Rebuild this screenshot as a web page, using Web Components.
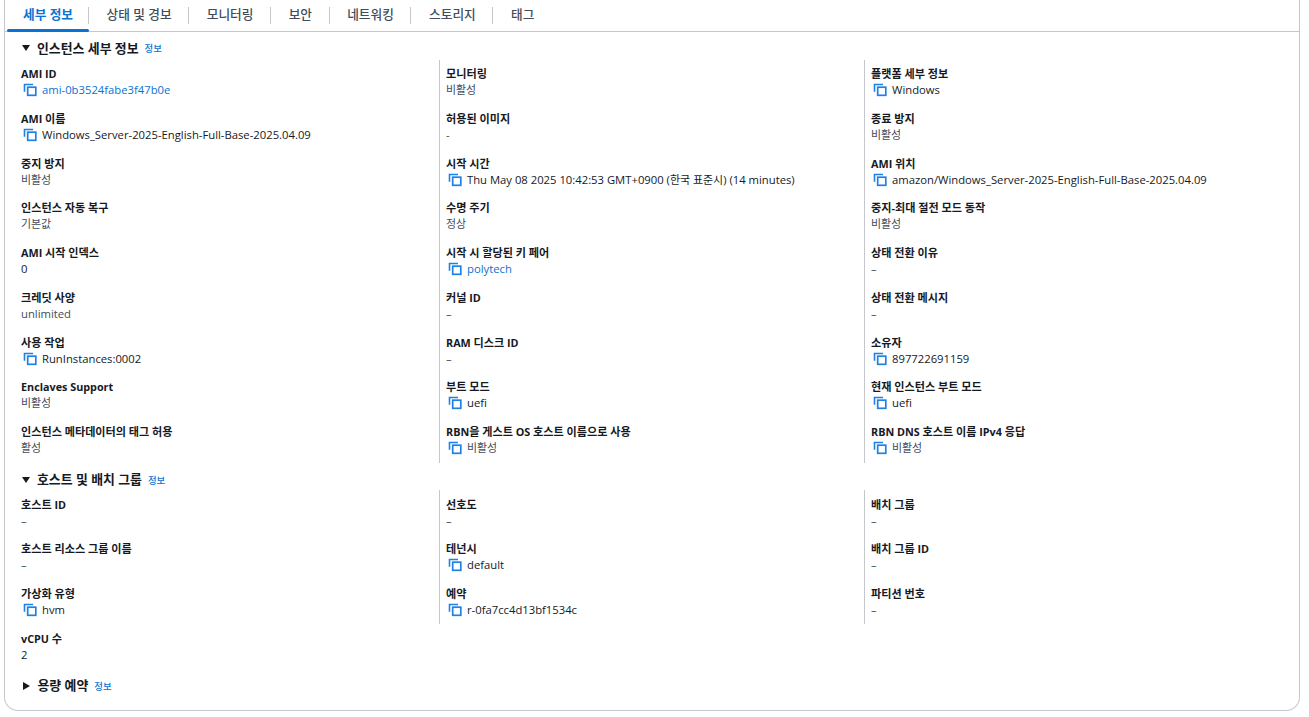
<!DOCTYPE html>
<html lang="ko">
<head>
<meta charset="utf-8">
<title>인스턴스 세부 정보</title>
<style>
	html, body { margin: 0; background: #fff; }
	body {
		padding: 0 9px 6px 4px;
		height: 717px;
		box-sizing: border-box;
		overflow: hidden;
		font-family: "Open Sans", "Noto Sans CJK KR", sans-serif;
		color: #16191f;
	}
	.k { font-size: 0.97em; }
</style>
</head>
<body>
<ec2-panel>
	<ec2-tabs></ec2-tabs>
	<ec2-section title="인스턴스 세부 정보" open id="details" style="--top: 6px; --cols-gap: 2px; --pad: 6px"></ec2-section>
	<ec2-section title="호스트 및 배치 그룹" open id="host" style="--top: 7px; --pad: 6.8px"></ec2-section>
	<ec2-section title="용량 예약" id="capacity" style="--top: 7px"></ec2-section>
</ec2-panel>

<script>
const COPY_ICON = `<svg width="14" height="14" viewBox="0 0 14 14" fill="none" stroke="#1f80e6" aria-hidden="true"><path d="M1.5 8.8V1.5H10" stroke-width="1.6"/><rect x="4.7" y="4.2" width="8.1" height="8.1" stroke-width="1.7"/></svg>`;
const hangul = (s) => s.replace(/[가-힣]+/g, (m) => `<span class="k">${m}</span>`);

customElements.define('ec2-panel', class extends HTMLElement {
	constructor() {
		super();
		this.attachShadow({ mode: "open" }).innerHTML = `
			<style>
				:host {
					display: block;
					height: 711px;
					box-sizing: border-box;
					border: 1px solid #c6c6cd;
					border-top: 0;
					border-radius: 0 0 14px 14px;
				}
			</style>
			<slot></slot>
		`;
	}
});

customElements.define('ec2-tabs', class extends HTMLElement {
	constructor() {
		super();
		const tabs = ["세부 정보", "상태 및 경보", "모니터링", "보안", "네트워킹", "스토리지", "태그"];
		this.attachShadow({ mode: "open" }).innerHTML = `
			<style>
				:host {
					display: flex;
					height: 32px;
					padding-left: 2px;
					box-sizing: border-box;
					border-bottom: 1px solid #c6c6cd;
					font-size: 12.7px;
					font-weight: 500;
					color: #414d5c;
				}
				a {
					position: relative;
					display: flex;
					align-items: center;
					height: 31px;
					padding: 0 17.6px 4px;
					box-sizing: border-box;
				}
				a:first-of-type { padding: 0 16px 4px; color: #0972d3; font-weight: 700; }
				a:not(:last-of-type)::after {
					content: "";
					position: absolute;
					right: 0;
					top: 7px;
					height: 17px;
					border-right: 1px solid #c6c6cd;
				}
				a:first-of-type::before {
					content: "";
					position: absolute;
					left: 0;
					right: 0;
					bottom: -1px;
					height: 3px;
					border-radius: 2px;
					background: #0972d3;
				}
			</style>
			${tabs.map((t) => `<a>${t}</a>`).join("")}
		`;
	}
});

customElements.define('ec2-section', class extends HTMLElement {
	constructor() {
		super();
		const open = this.hasAttribute("open");
		this.attachShadow({ mode: "open" }).innerHTML = `
			<style>
				:host { display: block; padding: var(--top, 0) 0 0 16px; }
				header {
					display: flex;
					align-items: center;
					height: 20px;
					font-size: 12.9px;
					font-weight: 700;
				}
				span { position: relative; top: -1px; }
				i {
					width: 0;
					height: 0;
					margin-right: 7.5px;
					${open
						? "border: 4.5px solid transparent; border-top: 6px solid #16191f; border-bottom: 0; margin-left: 0.5px;"
						: "border: 4px solid transparent; border-left: 7px solid #16191f; border-right: 0; margin: 0 7.5px 0 2px;"}
				}
				a { margin-left: 6px; font-size: 9.4px; color: #0972d3; font-weight: 500; }
				.cols {
					display: grid;
					grid-template-columns: 421px 425px 1fr;
					margin: var(--cols-gap, 0) 0 0 -3px;
				}
			</style>
			<header><i></i><span>${this.getAttribute("title")}</span><a>정보</a></header>
			<div class="cols"><slot></slot></div>
		`;
	}
});

customElements.define('ec2-column', class extends HTMLElement {
	constructor() {
		super();
		this.attachShadow({ mode: "open" }).innerHTML = `
			<style>
				:host {
					display: block;
					align-self: start;
					padding: var(--pad, 6px) 0 0 3px;
					height: var(--h);
					box-sizing: border-box;
				}
				:host(:not(:first-child)) { border-left: 1px solid #c6c6cd; padding-left: 6px; }
			</style>
			<slot></slot>
		`;
	}
});

customElements.define('ec2-field', class extends HTMLElement {
	constructor() {
		super();
		this.attachShadow({ mode: "open" });
	}

	connectedCallback() {
		const copy = this.hasAttribute("copy");
		const colour = this.hasAttribute("link") ? "#0972d3" : this.hasAttribute("muted") ? "#414d5c" : "#16191f";
		this.shadowRoot.innerHTML = `
			<style>
				:host { display: block; height: 44.75px; font-size: 11.28px; line-height: 16px; }
				b { display: block; font-size: 10.8px; font-weight: 700; color: #16191f; }
				b .k { font-size: 1.03em; }
				div { display: flex; align-items: center; height: 16px; color: ${colour}; }
				svg { margin: 0 5px 0 2px; flex: none; }
			</style>
			<b>${hangul(this.getAttribute("label"))}</b>
			<div>${copy ? COPY_ICON : ""}<span><slot></slot></span></div>
		`;
	}
});

// [label, value, flags] c = copy, l = link, m = muted
const DETAILS = [
	[
		["AMI ID", "ami-0b3524fabe3f47b0e", "cl"],
		["AMI 이름", "Windows_Server-2025-English-Full-Base-2025.04.09", "c"],
		["중지 방지", "비활성", "m"],
		["인스턴스 자동 복구", "기본값", "m"],
		["AMI 시작 인덱스", "0", ""],
		["크레딧 사양", "unlimited", "m"],
		["사용 작업", "RunInstances:0002", "c"],
		["Enclaves Support", "비활성", "m"],
		["인스턴스 메타데이터의 태그 허용", "활성", "m"],
	],
	[
		["모니터링", "비활성", "m"],
		["허용된 이미지", "-", "m"],
		["시작 시간", "Thu May 08 2025 10:42:53 GMT+0900 (한국 표준시) (14 minutes)", "c"],
		["수명 주기", "정상", "m"],
		["시작 시 할당된 키 페어", "polytech", "cl"],
		["커널 ID", "–", "m"],
		["RAM 디스크 ID", "–", "m"],
		["부트 모드", "uefi", "c"],
		["RBN을 게스트 OS 호스트 이름으로 사용", "비활성", "cm"],
	],
	[
		["플랫폼 세부 정보", "Windows", "c"],
		["종료 방지", "비활성", "m"],
		["AMI 위치", "amazon/Windows_Server-2025-English-Full-Base-2025.04.09", "c"],
		["중지-최대 절전 모드 동작", "비활성", "m"],
		["상태 전환 이유", "–", "m"],
		["상태 전환 메시지", "–", "m"],
		["소유자", "897722691159", "c"],
		["현재 인스턴스 부트 모드", "uefi", "c"],
		["RBN DNS 호스트 이름 IPv4 응답", "비활성", "cm"],
	],
];
const HOST = [
	[
		["호스트 ID", "–", "m"],
		["호스트 리소스 그룹 이름", "–", "m"],
		["가상화 유형", "hvm", "c"],
		["vCPU 수", "2", ""],
	],
	[
		["선호도", "–", "m"],
		["테넌시", "default", "c"],
		["예약", "r-0fa7cc4d13bf1534c", "c"],
	],
	[
		["배치 그룹", "–", "m"],
		["배치 그룹 ID", "–", "m"],
		["파티션 번호", "–", "m"],
	],
];

function fill(id, cols) {
	const section = document.getElementById(id);
	cols.forEach((rows) => {
		const col = document.createElement("ec2-column");
		col.style.setProperty("--h", rows.length * 44.75 + "px");
		rows.forEach(([label, value, flags]) => {
			const f = document.createElement("ec2-field");
			f.setAttribute("label", label);
			if (flags.includes("c")) f.setAttribute("copy", "");
			if (flags.includes("l")) f.setAttribute("link", "");
			if (flags.includes("m")) f.setAttribute("muted", "");
			f.innerHTML = hangul(value);
			col.appendChild(f);
		});
		section.appendChild(col);
	});
}
fill("details", DETAILS);
fill("host", HOST);
</script>
</body>
</html>
